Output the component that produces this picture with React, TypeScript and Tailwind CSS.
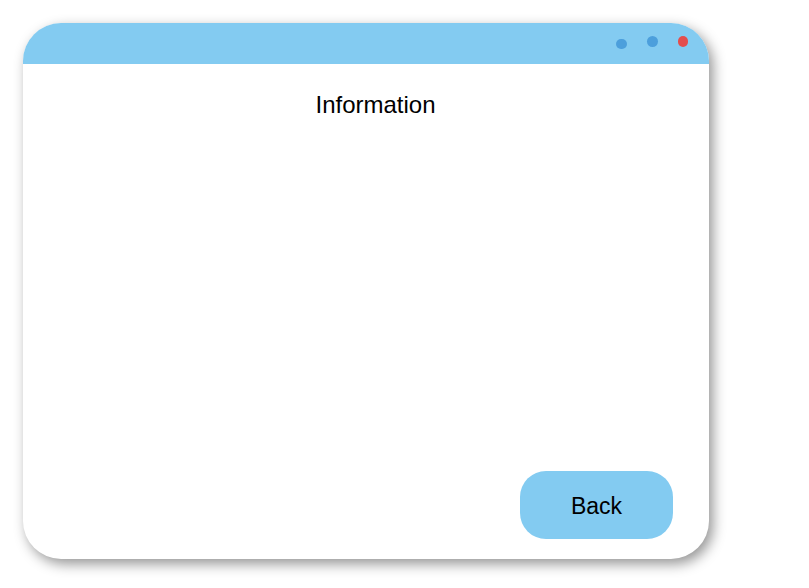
export default function App() {
  return (
    <div className="min-h-screen bg-white p-[23px] font-['Liberation_Sans',Arial,sans-serif]">
      <div className="flex h-[536px] w-[686px] flex-col overflow-hidden rounded-[38px] bg-white shadow-[4px_5px_13px_rgba(0,0,0,0.42)]">
        <div className="flex h-[41px] shrink-0 items-start justify-end gap-[20px] bg-[#83cbf1] pr-[21px]">
          <span className="mt-[16px] h-[10px] w-[11px] rounded-full bg-[#4c9fdc]" />
          <span className="mt-[13px] h-[11px] w-[11px] rounded-full bg-[#4c9fdc]" />
          <span className="mt-[13px] h-[11px] w-[10px] rounded-full bg-[#e34d4d]" />
        </div>
        <div className="flex flex-1 flex-col">
          <h1 className="mt-[27px] pl-[19px] text-center text-[24px] leading-[28px] text-black">
            Information
          </h1>
          <div className="flex-1" />
          <div className="mb-[20px] mr-[36px] flex justify-end">
            <button className="h-[68px] w-[153px] rounded-[26px] bg-[#83cbf1] pt-[2px] text-[23px] text-black">
              Back
            </button>
          </div>
        </div>
      </div>
    </div>
  );
}
